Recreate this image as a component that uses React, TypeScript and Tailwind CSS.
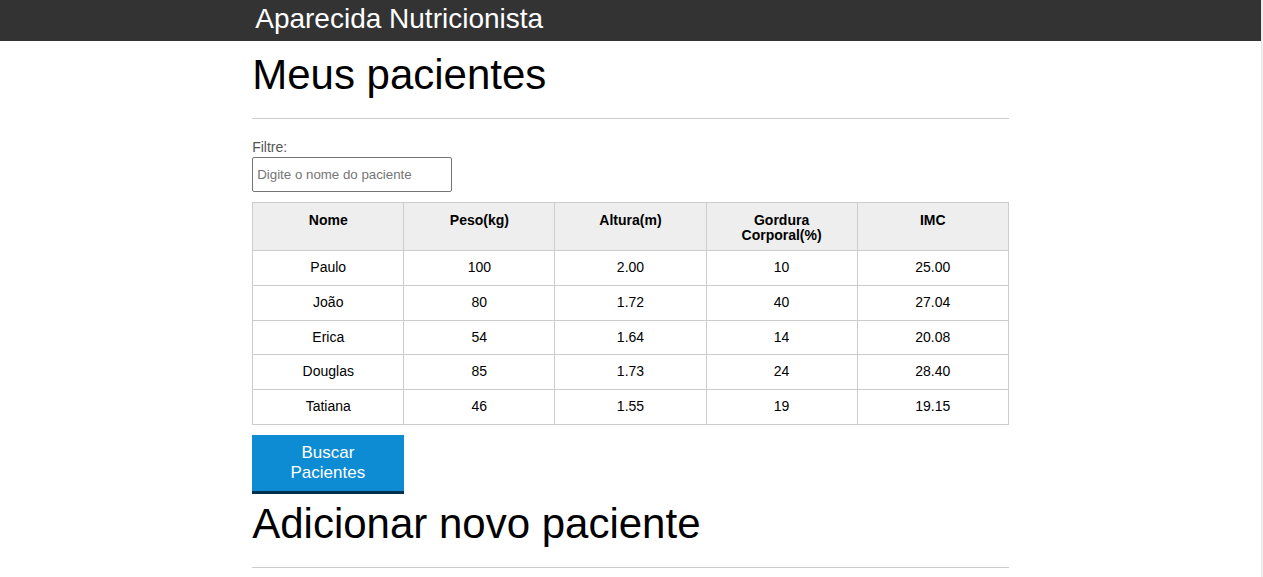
const pacientes = [
  { nome: "Paulo", peso: "100", altura: "2.00", gordura: "10", imc: "25.00" },
  { nome: "João", peso: "80", altura: "1.72", gordura: "40", imc: "27.04" },
  { nome: "Erica", peso: "54", altura: "1.64", gordura: "14", imc: "20.08" },
  { nome: "Douglas", peso: "85", altura: "1.73", gordura: "24", imc: "28.40" },
  { nome: "Tatiana", peso: "46", altura: "1.55", gordura: "19", imc: "19.15" },
];

const colunas = ["Nome", "Peso(kg)", "Altura(m)", "Gordura Corporal(%)", "IMC"];

export default function App() {
  return (
    <div className="flex min-h-[577px] bg-white font-['Liberation_Sans',Arial,sans-serif] text-black">
      <div className="flex-1 flex flex-col">
        {/* ── Header ─────────────────────── */}
        <header className="h-[41px] bg-[#333333]">
          <div className="w-[60%] mx-auto pl-[3px] pt-[3px]">
            <span className="text-[28px] leading-[32px] text-white">Aparecida Nutricionista</span>
          </div>
        </header>

        <main className="w-[60%] mx-auto">
          {/* ── Meus pacientes ─────────────── */}
          <section>
            <h1 className="mt-[10px] text-[42px] leading-[48px] font-normal">Meus pacientes</h1>
            <hr className="mt-[19px] border-t border-[#cccccc]" />

            <label className="block mt-[20px] text-[14px] leading-[16px] text-[#555555]" htmlFor="filtro">
              Filtre:
            </label>
            <input
              id="filtro"
              type="text"
              placeholder="Digite o nome do paciente"
              className="mt-[2px] w-[200px] h-[35px] px-1 text-[13.3px] border border-[#767676] rounded-[2px] placeholder:text-[#757575] outline-none"
            />

            <table className="mt-[10px] w-full table-fixed border-collapse text-[14px]">
              <thead>
                <tr className="bg-[#eeeeee]">
                  {colunas.map((c) => (
                    <th
                      key={c}
                      className="border border-[#cccccc] px-2 pt-[10px] pb-[6px] align-top font-bold leading-[15px] h-[48px]"
                    >
                      {c}
                    </th>
                  ))}
                </tr>
              </thead>
              <tbody>
                {pacientes.map((p) => (
                  <tr key={p.nome}>
                    {[p.nome, p.peso, p.altura, p.gordura, p.imc].map((v, i) => (
                      <td key={i} className="border border-[#cccccc] px-2 py-2 text-center leading-[17.8px]">
                        {v}
                      </td>
                    ))}
                  </tr>
                ))}
              </tbody>
            </table>

            <button className="mt-[10px] w-[20%] bg-[#0d8bd3] border-b-[3px] border-[#00304e] px-5 py-2 text-[17px] leading-[20px] text-white">
              Buscar Pacientes
            </button>
          </section>

          {/* ── Adicionar novo paciente ─────── */}
          <section>
            <h1 className="mt-[6px] text-[42px] leading-[48px] font-normal">Adicionar novo paciente</h1>
            <hr className="mt-[19px] border-t border-[#cccccc]" />
          </section>
        </main>
      </div>
      <div className="w-[2px] bg-[#f1f1f1] border-l border-[#e6e6e6]" />
    </div>
  );
}
